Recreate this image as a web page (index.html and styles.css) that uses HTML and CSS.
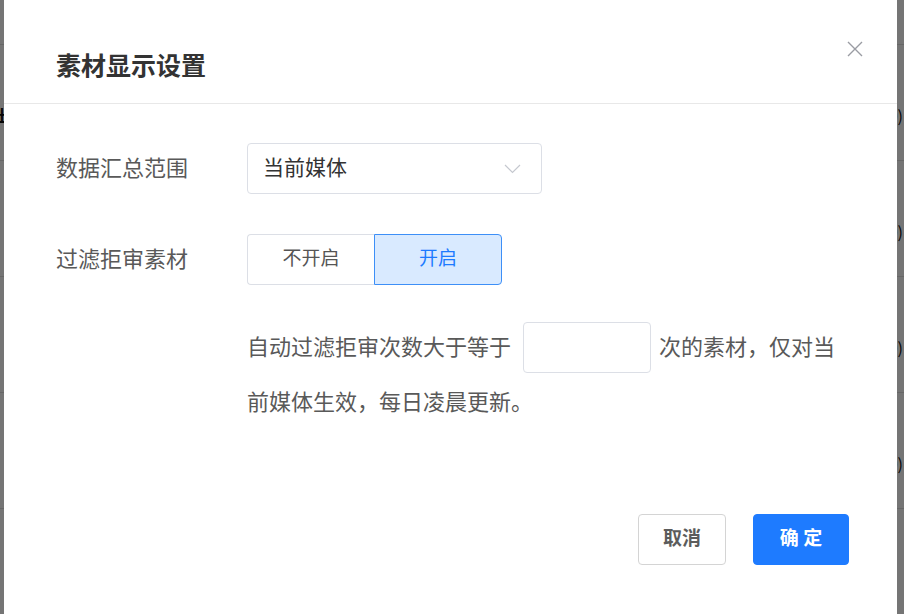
FILE: index.html
```html
<!DOCTYPE html>
<html lang="zh-CN">
<head>
    <meta charset="UTF-8">
    <meta name="viewport" content="width=device-width, initial-scale=1.0">
    <title>素材显示设置</title>
    <link rel="stylesheet" href="styles.css">
</head>
<body>

    <!-- page behind the dialog -->
    <div class="page">
        <div class="row row-first"><span class="cell-left">l</span><span class="cell-right"></span></div>
        <div class="row"><span class="cell-left">出</span><span class="cell-right">0)</span></div>
        <div class="row"><span class="cell-left">:</span><span class="cell-right">0)</span></div>
        <div class="row"><span class="cell-left">l</span><span class="cell-right">0)</span></div>
        <div class="row"><span class="cell-left"></span><span class="cell-right">0)</span></div>
    </div>

    <div class="mask"></div>

    <div class="dialog">
        <div class="dialog-header">
            <h2 class="dialog-title">素材显示设置</h2>
            <span class="dialog-close">
                <svg width="16" height="16" viewBox="0 0 16 16">
                    <path d="M1 1 L15 15 M15 1 L1 15" stroke="#9a9ca3" stroke-width="1.4" fill="none"/>
                </svg>
            </span>
        </div>

        <div class="dialog-body">
            <div class="form-row">
                <label class="form-label">数据汇总范围</label>
                <div class="select">
                    <span class="select-value">当前媒体</span>
                    <svg class="select-arrow" width="17" height="10" viewBox="0 0 17 10">
                        <path d="M1 1 L8.5 8.5 L16 1" stroke="#c5c8cf" stroke-width="1.2" fill="none"/>
                    </svg>
                </div>
            </div>

            <div class="form-row">
                <label class="form-label">过滤拒审素材</label>
                <div class="toggle-group">
                    <button class="toggle">不开启</button>
                    <button class="toggle toggle-active">开启</button>
                </div>
            </div>

            <p class="desc">自动过滤拒审次数大于等于<input class="count-input" type="text">次的素材，仅对当前媒体生效，每日凌晨更新。</p>

            <div class="dialog-footer">
                <button class="btn btn-cancel">取消</button>
                <button class="btn btn-primary">确 定</button>
            </div>
        </div>
    </div>

</body>
</html>
```

FILE: styles.css
```css
body {
    margin: 0;
    font-family: "Noto Sans CJK SC", "Noto Sans", sans-serif;
    background: #fff;
    overflow: hidden;
}

/* Page behind */
.page { width: 904px; }
.row {
    height: 116px;
    box-sizing: border-box;
    padding-top: 24px;
    border-bottom: 1px solid #e0e0e0;
    display: flex;
    justify-content: space-between;
    align-items: center;
    font-size: 16px;
    color: #111;
}
.row-first { height: 45px; padding-top: 0; }
.cell-left { margin-left: -6px; font-weight: bold; }
.cell-right { padding-right: 1px; }

.mask {
    position: fixed;
    top: 0; left: 0; right: 0; bottom: 0;
    background: rgba(0, 0, 0, 0.54);
}

/* Dialog */
.dialog {
    position: absolute;
    top: 0;
    left: 4px;
    width: 893px;
    height: 640px;
    background: #fff;
}
.dialog-header {
    height: 104px;
    box-sizing: border-box;
    padding: 46px 52px 0;
    border-bottom: 1px solid #e8e8e8;
}
.dialog-title {
    margin: 0;
    font-size: 25px;
    line-height: 36px;
    font-weight: bold;
    color: #333;
}
.dialog-close {
    position: absolute;
    top: 41px;
    right: 34px;
    width: 16px;
    height: 16px;
    cursor: pointer;
}
.dialog-close svg { display: block; }

.dialog-body { padding: 39px 48px 0 52px; }

.form-row { display: flex; align-items: center; margin-bottom: 40px; }
.form-label {
    width: 191px;
    flex-shrink: 0;
    padding-bottom: 6px;
    font-size: 22px;
    line-height: 30px;
    color: #595959;
}

.select {
    width: 295px;
    height: 51px;
    box-sizing: border-box;
    border: 1px solid #dcdfe6;
    border-radius: 4px;
    padding: 0 20px 0 15px;
    display: flex;
    align-items: center;
    justify-content: space-between;
}
.select-value { font-size: 21px; line-height: 30px; padding-bottom: 6px; color: #333; }
.select-arrow { display: block; }

.toggle-group { display: flex; }
.toggle {
    width: 128px;
    height: 51px;
    box-sizing: border-box;
    border: 1px solid #3d8ff7;
    border-radius: 0 4px 4px 0;
    background: #fff;
    font-family: inherit;
    font-size: 19px;
    color: #555;
    padding: 0 0 6px;
    cursor: pointer;
}
.toggle:first-child {
    width: 127px;
    border: 1px solid #dcdfe6;
    border-right: none;
    border-radius: 4px 0 0 4px;
}
.toggle-active { background: #d9eaff; color: #1e7bff; }

.desc {
    margin: -5px 0 0 191px;
    font-size: 22px;
    line-height: 51px;
    color: #595959;
}
.count-input {
    width: 128px;
    height: 51px;
    box-sizing: border-box;
    margin: 0 8px 0 12px;
    border: 1px solid #dcdfe6;
    border-radius: 4px;
    vertical-align: middle;
    position: relative;
    top: -2px;
    outline: none;
    font-family: inherit;
    font-size: 20px;
    padding: 0 12px;
}

.dialog-footer {
    display: flex;
    justify-content: flex-end;
    gap: 27px;
    margin-top: 88px;
}
.btn {
    height: 51px;
    box-sizing: border-box;
    border-radius: 4px;
    font-family: inherit;
    font-size: 19px;
    font-weight: bold;
    padding: 0 0 6px;
    cursor: pointer;
}
.btn-cancel { width: 88px; background: #fff; border: 1px solid #d4d4d4; color: #5c5c5c; }
.btn-primary { width: 96px; background: #1e7bff; border: 1px solid #1e7bff; color: #fff; }
```
